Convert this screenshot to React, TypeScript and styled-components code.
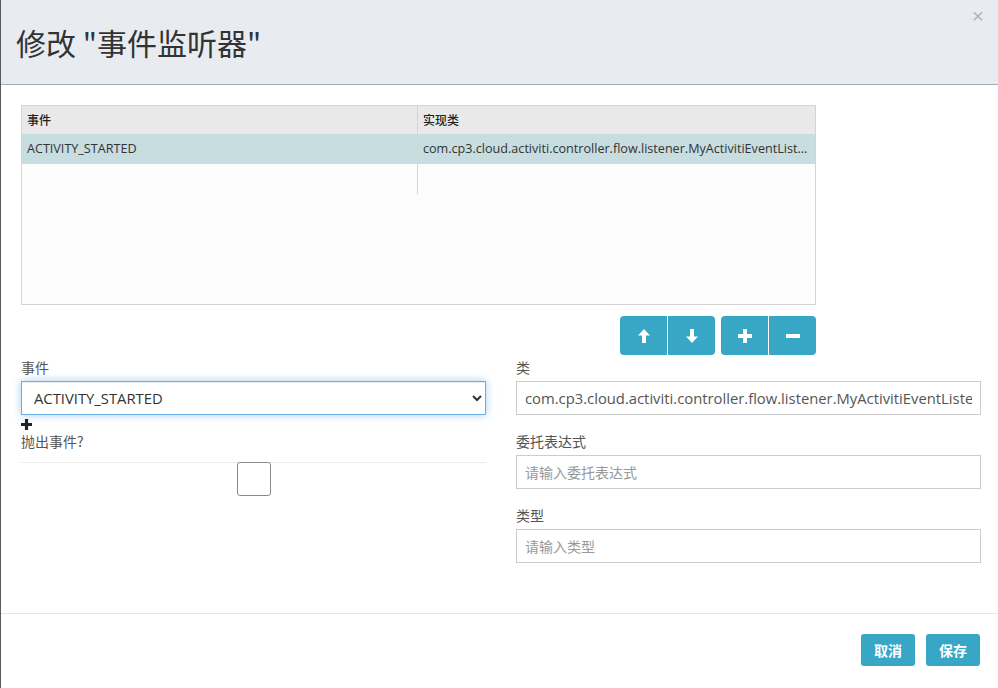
import * as React from 'react';
import styled, { createGlobalStyle } from 'styled-components';

const GlobalStyle = createGlobalStyle`
	html, body {
		margin: 0;
		padding: 0;
		background: #fff;
	}
	body {
		font-family: "Open Sans", "Noto Sans CJK SC", sans-serif;
		color: #333;
	}
	* {
		box-sizing: border-box;
	}
`;

interface Listener {
	event: string;
	className: string;
}

const listeners: Listener[] = [
	{ event: 'ACTIVITY_STARTED', className: 'com.cp3.cloud.activiti.controller.flow.listener.MyActivitiEventListener' },
];

// glyph-style icons, thick strokes like the bootstrap glyphicons
const ArrowUp = () => (
	<svg width="12" height="14" viewBox="0 0 12 14">
		<path d="M6 0 L12 6.5 L8 6.5 L8 14 L4 14 L4 6.5 L0 6.5 Z" fill="currentColor" />
	</svg>
);

const ArrowDown = () => (
	<svg width="12" height="14" viewBox="0 0 12 14">
		<path d="M6 14 L12 7.5 L8 7.5 L8 0 L4 0 L4 7.5 L0 7.5 Z" fill="currentColor" />
	</svg>
);

const Plus = ({ size = 14 }: { size?: number }) => (
	<svg width={size} height={size} viewBox="0 0 14 14">
		<path d="M5 0 H9 V5 H14 V9 H9 V14 H5 V9 H0 V5 H5 Z" fill="currentColor" />
	</svg>
);

const Minus = () => (
	<svg width="14" height="14" viewBox="0 0 14 14">
		<path d="M0 5 H14 V9 H0 Z" fill="currentColor" />
	</svg>
);

const App: React.FC = () => {
	return (
		<>
			<GlobalStyle />
			<Modal>
				<Header>
					<Title>修改 "事件监听器"</Title>
					<Close>×</Close>
				</Header>
				<Body>
					<Grid>
						<HeadRow>
							<HeadCell>事件</HeadCell>
							<HeadCell>实现类</HeadCell>
						</HeadRow>
						{listeners.map((item) => (
							<Row key={item.event} selected>
								<Cell>{item.event}</Cell>
								<Cell>{item.className}</Cell>
							</Row>
						))}
						<Row>
							<Cell />
							<Cell />
						</Row>
					</Grid>
					<Toolbar>
						<BtnGroup>
							<IconButton><ArrowUp /></IconButton>
							<IconButton><ArrowDown /></IconButton>
						</BtnGroup>
						<BtnGroup>
							<IconButton><Plus /></IconButton>
							<IconButton><Minus /></IconButton>
						</BtnGroup>
					</Toolbar>
					<Form>
						<Column>
							<Label>事件</Label>
							<Select defaultValue="ACTIVITY_STARTED">
								<option>ACTIVITY_STARTED</option>
							</Select>
							<AddIcon><Plus size={11} /></AddIcon>
							<Label>抛出事件?</Label>
							<CheckRow>
								<Check type="checkbox" />
							</CheckRow>
						</Column>
						<Column>
							<Group>
								<Label>类</Label>
								<Input defaultValue="com.cp3.cloud.activiti.controller.flow.listener.MyActivitiEventListener" />
							</Group>
							<Group>
								<Label>委托表达式</Label>
								<Input placeholder="请输入委托表达式" />
							</Group>
							<Group>
								<Label>类型</Label>
								<Input placeholder="请输入类型" />
							</Group>
						</Column>
					</Form>
				</Body>
				<Footer>
					<Button>取消</Button>
					<Button>保存</Button>
				</Footer>
			</Modal>
		</>
	);
};

export default App;

const Modal = styled.div`
	width: 998px;
	height: 688px;
	display: flex;
	flex-direction: column;
	border-left: 1px solid #5a5a5a;
	background: #fff;
`;

const Header = styled.div`
	position: relative;
	height: 85px;
	flex-shrink: 0;
	display: flex;
	align-items: center;
	padding: 0 15px;
	background: #e8ecf0;
	border-bottom: 1px solid #a3adba;
`;

const Title = styled.h4`
	margin: 0;
	font-family: "Noto Sans CJK SC", sans-serif;
	font-size: 30px;
	font-weight: 400;
	color: #333;
	line-height: 1;
`;

const Close = styled.span`
	position: absolute;
	top: 4px;
	right: 14px;
	font-size: 21px;
	font-family: "Liberation Sans", sans-serif;
	color: #b4b4b4;
`;

const Body = styled.div`
	flex: 1;
	padding: 20px 17px 0 20px;
`;

const Grid = styled.div`
	width: 795px;
	height: 200px;
	border: 1px solid #d4d4d4;
	background: #fdfdfd;
`;

const HeadRow = styled.div`
	display: grid;
	grid-template-columns: 395px 1fr;
	height: 28px;
	background: #e9e9e9;
`;

const HeadCell = styled.div`
	padding: 0 5px;
	font-family: "Noto Sans CJK SC", sans-serif;
	font-size: 12px;
	font-weight: 500;
	line-height: 28px;
	color: #222;
	& + & {
		border-left: 1px solid #d4d4d4;
	}
`;

const Row = styled.div<{ selected?: boolean }>`
	display: grid;
	grid-template-columns: 395px 1fr;
	height: 30px;
	background: ${(p) => (p.selected ? '#c8dde0' : 'transparent')};
`;

const Cell = styled.div`
	padding: 0 5px;
	font-size: 12.6px;
	line-height: 30px;
	color: #333;
	white-space: nowrap;
	overflow: hidden;
	text-overflow: ellipsis;
	& + & {
		border-left: 1px solid #d4d4d4;
	}
`;

const Toolbar = styled.div`
	width: 795px;
	display: flex;
	justify-content: flex-end;
	gap: 6px;
	margin-top: 11px;
`;

const BtnGroup = styled.div`
	display: flex;
	border-radius: 4px;
	overflow: hidden;
`;

const IconButton = styled.button`
	width: 47px;
	height: 39px;
	border: none;
	padding: 0;
	display: flex;
	align-items: center;
	justify-content: center;
	background: #38a7c6;
	color: #fff;
	& + & {
		border-left: 1px solid #fff;
		width: 48px;
	}
`;

const Form = styled.div`
	display: grid;
	grid-template-columns: 465px 465px;
	column-gap: 30px;
	margin-top: 2px;
`;

const Column = styled.div`
	display: flex;
	flex-direction: column;
`;

const Group = styled.div`
	display: flex;
	flex-direction: column;
	margin-bottom: 16px;
`;

const Label = styled.label`
	font-family: "Noto Sans CJK SC", sans-serif;
	font-size: 14px;
	line-height: 20px;
	color: #555;
	margin-bottom: 4px;
`;

const Select = styled.select`
	height: 34px;
	padding: 0 8px;
	font-family: "Open Sans", "Noto Sans CJK SC", sans-serif;
	font-size: 14.8px;
	color: #333;
	background: #fff;
	border: 1px solid #66afe9;
	border-radius: 0;
	outline: none;
	box-shadow: inset 0 1px 1px rgba(0, 0, 0, 0.075), 0 0 8px rgba(102, 175, 233, 0.6);
`;

const AddIcon = styled.span`
	display: flex;
	height: 15px;
	align-items: flex-end;
	color: #222;
	margin-bottom: 1px;
`;

const CheckRow = styled.div`
	height: 34px;
	margin-top: 7px;
	display: flex;
	justify-content: center;
	border-top: 1px solid #ececec;
`;

const Check = styled.input`
	appearance: none;
	margin: 0;
	width: 34px;
	height: 34px;
	border: 1px solid #8a8a8a;
	border-radius: 3px;
	background: #fff;
	margin-top: -1px;
`;

const Input = styled.input`
	height: 34px;
	padding: 0 8px;
	font-family: "Open Sans", "Noto Sans CJK SC", sans-serif;
	font-size: 14.8px;
	color: #555;
	background: #fff;
	border: 1px solid #ccc;
	border-radius: 0;
	outline: none;
	&::placeholder {
		font-family: "Noto Sans CJK SC", sans-serif;
		font-size: 14px;
		color: #999;
	}
`;

const Footer = styled.div`
	height: 75px;
	flex-shrink: 0;
	border-top: 1px solid #e5e5e5;
	display: flex;
	justify-content: flex-end;
	align-items: flex-start;
	gap: 11px;
	padding: 20px 18px 0 0;
`;

const Button = styled.button`
	width: 54px;
	height: 32px;
	border: none;
	border-radius: 3px;
	background: #38a7c6;
	color: #fff;
	font-family: "Noto Sans CJK SC", sans-serif;
	font-size: 14px;
	font-weight: 700;
	padding: 0;
`;
